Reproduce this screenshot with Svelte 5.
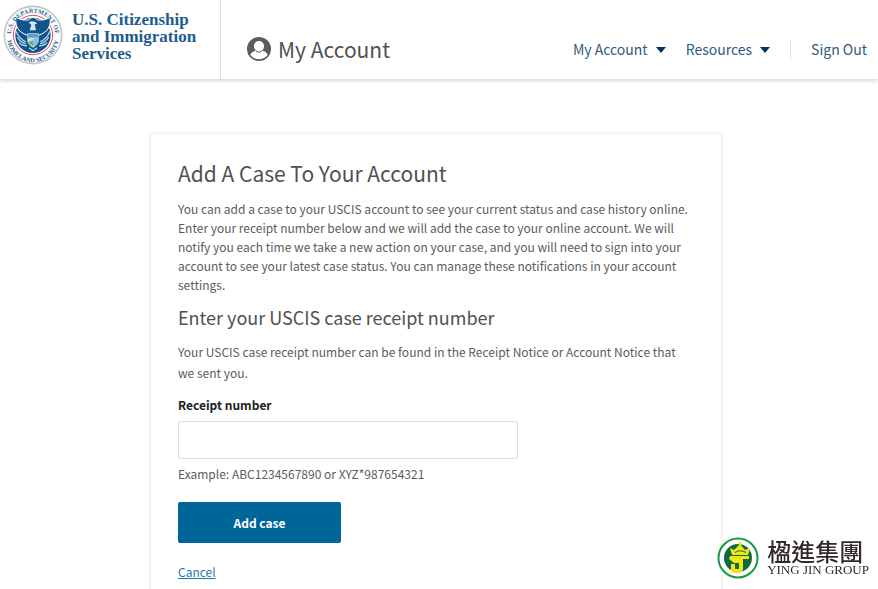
<script>
  let receipt = '';

  const menus = ['My Account', 'Resources'];
</script>

<header class="header">
  <a class="brand" href="#home">
    <svg class="seal" viewBox="0 0 180 180" aria-hidden="true">
      <defs>
        <path id="arc-top" d="M 31 119 A 66 66 0 1 1 149 119" />
        <path id="arc-bottom" d="M 12 94 A 78 78 0 0 0 168 94" />
      </defs>
      <circle cx="90" cy="90" r="86" fill="#fff" stroke="#c3c5c7" stroke-width="5" />
      <circle cx="90" cy="90" r="59" fill="#fff" stroke="#df4f63" stroke-width="3" />
      <circle cx="90" cy="91" r="53" fill="#10558c" />
      <path
        d="M39 38 Q58 48 77 45 Q80 38 91 37 Q100 38 103 45 Q122 48 141 38 Q145 62 130 78 Q116 89 106 91 L74 91 Q64 89 50 78 Q35 62 39 38Z"
        fill="#10558c"
        stroke="#fff"
        stroke-width="3" />
      <path d="M77 52 L86 49 L98 51 L102 57 L95 58 L99 76 L80 76 L85 60Z" fill="#d9e6ef" />
      <g fill="none" stroke="#b9d2e3" stroke-width="4">
        <path d="M39 79 Q49 103 68 110 M43 96 Q52 113 69 116" />
        <path d="M141 79 Q131 103 112 110 M137 96 Q128 113 111 116" />
        <path d="M48 113 Q58 124 72 122 M132 113 Q122 124 108 122" />
        <path d="M78 128 L90 137 L102 128" />
      </g>
      <path d="M73 85 L107 85 L107 111 Q102 122 90 128 Q78 122 73 111Z" fill="#c4dfee" />
      <path d="M75 87 H105 V98 H75Z" fill="#5f9cc6" />
      <path d="M91 100 H106 V111 Q102 119 91 125Z" fill="#7fc0e3" />
      <path d="M75 112 L90 106 V123 Q78 119 75 112Z" fill="#76a95b" />
      <g class="seal-text">
        <text><textPath href="#arc-top" startOffset="50%">U.S. DEPARTMENT OF</textPath></text>
        <text><textPath href="#arc-bottom" startOffset="50%">HOMELAND SECURITY</textPath></text>
      </g>
    </svg>
    <span class="agency">U.S. Citizenship<br />and Immigration<br />Services</span>
  </a>

  <div class="account">
    <svg class="avatar" viewBox="0 0 24 24" aria-hidden="true">
      <circle cx="12" cy="12" r="12" fill="#5b5c5e" />
      <path d="M12 4 C15 4 17 6.200 17 9 C17 11 16.200 12.600 15 13.500 C18 14.300 20.200 16 20.700 17.800 C18.700 20.700 15.600 22.300 12 22.300 S5.300 20.700 3.300 17.800 C3.800 16 6 14.300 9 13.500 C7.800 12.600 7 11 7 9 C7 6.200 9 4 12 4Z" fill="#fff" />
      <path d="M8.700 13.800 Q12 16.800 15.300 13.800" fill="none" stroke="#5b5c5e" />
    </svg>
    <span>My Account</span>
  </div>

  <nav class="nav">
    {#each menus as menu}
      <button class="menu" type="button">
        {menu}
        <svg class="caret" viewBox="0 0 10 6" aria-hidden="true"><path d="M0 0H10L5 6Z" /></svg>
      </button>
    {/each}
    <a class="sign-out" href="#sign-out">Sign Out</a>
  </nav>
</header>

<main>
  <form class="card" on:submit|preventDefault>
    <h1>Add A Case To Your Account</h1>
    <p class="intro">
      You can add a case to your USCIS account to see your current status and case history online.
      Enter your receipt number below and we will add the case to your online account. We will
      notify you each time we take a new action on your case, and you will need to sign into your
      account to see your latest case status. You can manage these notifications in your account
      settings.
    </p>
    <h2>Enter your USCIS case receipt number</h2>
    <p class="hint">
      Your USCIS case receipt number can be found in the Receipt Notice or Account Notice that we
      sent you.
    </p>
    <label for="receipt">Receipt number</label>
    <input id="receipt" type="text" bind:value={receipt} aria-describedby="example" />
    <p class="example" id="example">Example: ABC1234567890 or XYZ*987654321</p>
    <button class="submit" type="submit">Add case</button>
    <a class="cancel" href="#cancel">Cancel</a>
  </form>
</main>

<aside class="watermark">
  <svg viewBox="0 0 42 42" aria-hidden="true">
    <circle cx="21" cy="21" r="19.500" fill="#fff" stroke="#149a41" stroke-width="2" />
    <circle cx="21" cy="21" r="14" fill="#0d6b3c" />
    <g fill="#f0e51c">
      <circle cx="23" cy="6.500" r="1.500" />
      <path d="M13 11 L17 13 L23 7 L28 13 L33 11 L31 18 H15Z" />
      <path d="M13 19 H32 V22 H26 V33 L23 36 H16 L14 34 V27 H18 V32 H22 V26 H17 L12 22Z" />
    </g>
    <path d="M18 15.500 Q23 12 29 15.500 M15 18.500 H31" fill="none" stroke="#0d6b3c" />
  </svg>
  <div class="group">
    <span class="group-zh" lang="zh-Hant">楹進集團</span>
    <span class="group-en">YING JIN GROUP</span>
  </div>
</aside>

<style>
  :global(body) {
    margin: 0;
    background: #fff;
    color: #5b5c5e;
    font-family: 'Noto Sans CJK SC', 'Open Sans', sans-serif;
    font-size: 12px;
    line-height: 19px;
  }
  .header {
    display: flex;
    height: 79px;
    box-shadow: 0 2px 4px rgba(0, 0, 0, 0.16);
  }
  .brand {
    display: flex;
    box-sizing: border-box;
    flex: none;
    width: 221px;
    padding: 5px 0 0 3px;
    gap: 9px;
    border-right: 1px solid #dcdee0;
    color: #205c8c;
    text-decoration: none;
  }
  .seal {
    width: 60px;
    height: 60px;
  }
  .seal-text {
    fill: #2d6591;
    font-family: 'Liberation Serif', serif;
    font-size: 19px;
    font-weight: bold;
    text-anchor: middle;
  }
  .agency {
    padding-top: 6px;
    font-family: 'Liberation Serif', serif;
    font-size: 17px;
    font-weight: bold;
    line-height: 17px;
    white-space: nowrap;
  }
  .account {
    display: flex;
    align-items: center;
    padding: 18px 0 0 26px;
    gap: 7px;
    color: #505154;
    font-size: 21px;
    line-height: 28px;
    white-space: nowrap;
  }
  .avatar {
    width: 24px;
    height: 24px;
  }
  .nav {
    display: flex;
    align-items: center;
    margin-left: auto;
    padding: 20px 11px 0 0;
    white-space: nowrap;
  }
  .menu {
    display: flex;
    align-items: center;
    margin-right: 20px;
    padding: 0;
    gap: 8px;
    border: 0;
    background: none;
    color: #2f5b83;
    font: inherit;
    font-size: 14px;
  }
  .caret {
    width: 10px;
    height: 6px;
    fill: #003366;
  }
  .sign-out {
    padding-left: 20px;
    border-left: 1px solid #dcdee0;
    color: #2f5b83;
    font-size: 14px;
    text-decoration: none;
  }
  main {
    padding: 55px 6px 0 0;
  }
  .card {
    box-sizing: border-box;
    max-width: 570px;
    margin: 0 auto;
    padding: 23px 27px 40px;
    box-shadow: 0 0 4px rgba(0, 0, 0, 0.14);
  }
  h1,
  h2 {
    margin: 0;
    color: #505154;
    font-weight: normal;
  }
  h1 {
    font-size: 21px;
    line-height: 32px;
  }
  h2 {
    margin-top: 9px;
    font-size: 18px;
    line-height: 28px;
  }
  p {
    margin: 0;
  }
  .intro {
    margin-top: 10px;
  }
  .hint {
    margin-top: 10px;
    line-height: 21px;
  }
  label {
    display: block;
    margin-top: 12px;
    color: #212121;
    font-weight: bold;
  }
  input {
    display: block;
    box-sizing: border-box;
    width: 340px;
    max-width: 100%;
    height: 38px;
    margin-top: 7px;
    padding: 0 10px;
    border: 1px solid #dcdee0;
    border-radius: 2px;
    color: inherit;
    font: inherit;
  }
  .example {
    margin-top: 5px;
  }
  .submit {
    display: block;
    width: 163px;
    height: 41px;
    margin-top: 19px;
    padding: 0;
    border: 0;
    border-radius: 2px;
    background: #006699;
    color: #fff;
    font: inherit;
    font-weight: bold;
  }
  .cancel {
    display: inline-block;
    margin-top: 19px;
    color: #2378a8;
  }
  .watermark {
    position: fixed;
    right: 9px;
    bottom: 10px;
    display: flex;
    align-items: center;
    gap: 8px;
    color: #33292a;
  }
  .watermark svg {
    width: 42px;
    height: 42px;
  }
  .group {
    display: flex;
    flex-direction: column;
  }
  .group-zh {
    font-family: 'Noto Sans CJK TC', sans-serif;
    font-size: 24px;
    font-weight: 500;
    line-height: 24px;
  }
  .group-en {
    font-family: 'Liberation Serif', serif;
    font-size: 13px;
    line-height: 14px;
    white-space: nowrap;
  }
</style>
